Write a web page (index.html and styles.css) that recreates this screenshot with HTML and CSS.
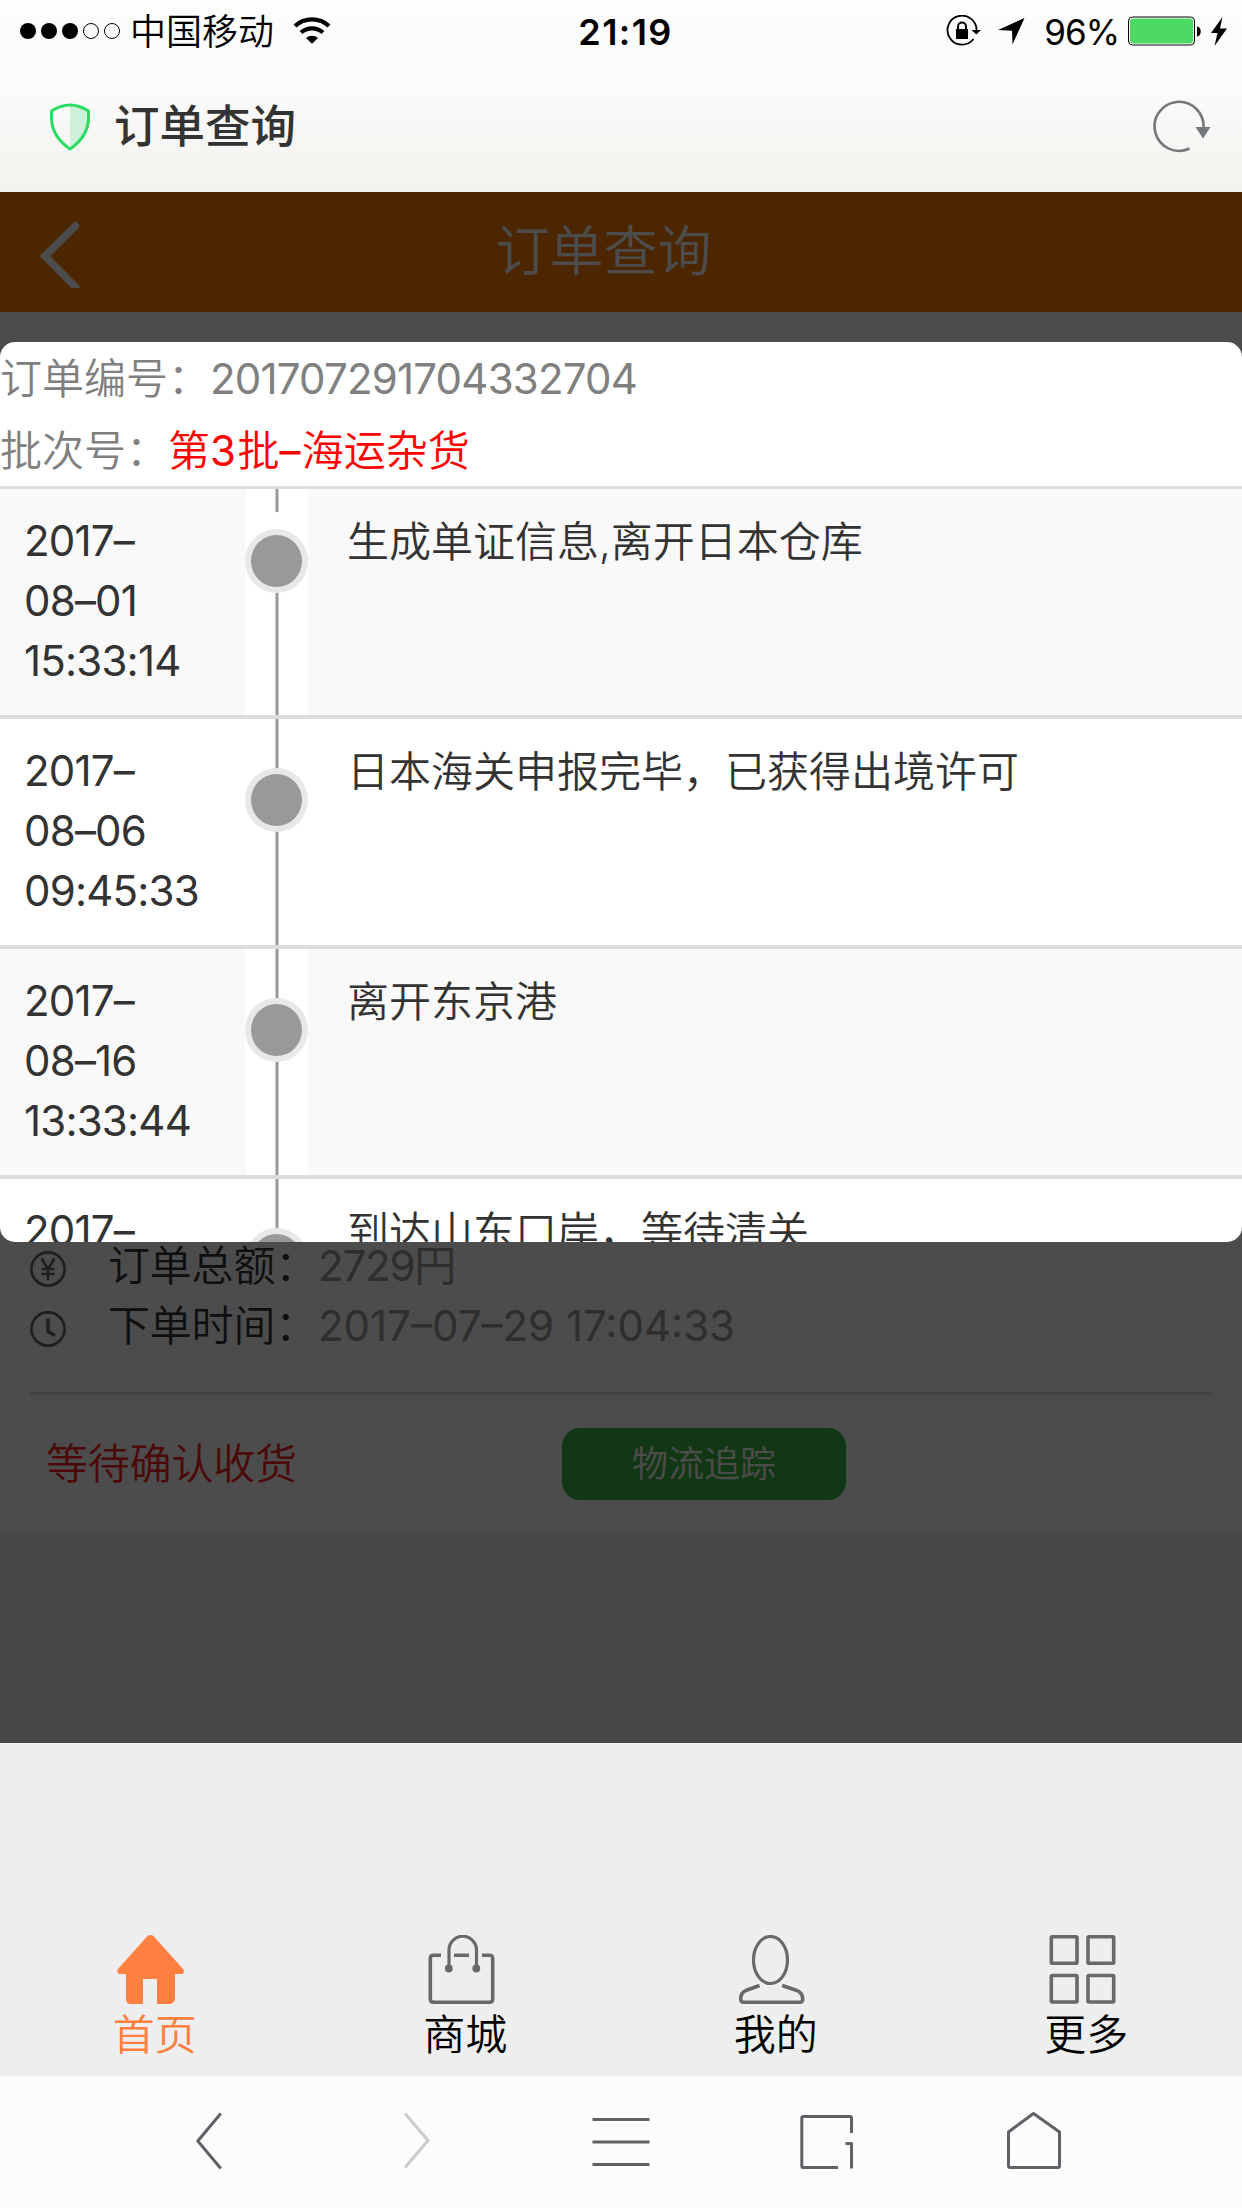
FILE: index.html
```html
<!DOCTYPE html>
<html lang="zh-CN">
<head>
<meta charset="utf-8">
<title>订单查询</title>
<link rel="stylesheet" href="styles.css">
</head>
<body>
<div class="chrome">
  <div class="status">
    <div class="status-left">
      <svg class="signal" width="102" height="18" viewBox="19 21 102 18"><g fill="#000"><circle cx="28" cy="30" r="8"/><circle cx="49" cy="30" r="8"/><circle cx="70" cy="30" r="8"/></g><g fill="none" stroke="#000"><circle cx="91" cy="30" r="7.5"/><circle cx="112" cy="30" r="7.5"/></g></svg>
      <span class="carrier">中国移动</span>
      <svg class="wifi" width="38" height="28" viewBox="293.500 15.500 38 28"><g fill="none" stroke="#000" stroke-width="4.200"><path d="M295.500 25.500a25 25 0 0 1 34 0"/><path d="M301.500 32a16.500 16.500 0 0 1 22 0"/></g><path d="M306.500 37.500a9.500 9.500 0 0 1 12 0l-6 5.700z"/></svg>
    </div>
    <div class="clock">21:19</div>
    <div class="status-right">
      <svg width="35" height="32" viewBox="946 14 35 32"><path d="M976.500 30A14.500 14.500 0 1 0 973.500 38" fill="none" stroke="#000" stroke-width="1.800"/><path d="M971.500 29h9.500l-4.700 4.500z"/><path d="M956 28h12v10h-12z"/><path d="M958 29v-3.500a4 4 0 0 1 8 0V29" fill="none" stroke="#000" stroke-width="2"/></svg>
      <svg class="locate" width="27" height="27" viewBox="1000 18 27 27"><path d="M1026.500 18L1000 30l14 .800 .500 13.700z"/></svg>
      <span class="percent">96%</span>
      <svg width="74" height="30" viewBox="1128 15.500 74 30"><rect x="1128.500" y="16.500" width="66" height="28" rx="4" fill="#fff" stroke="#000"/><rect x="1130" y="18" width="63" height="25" rx="3" fill="#4cd964"/><path d="M1197 26c5 0 5 10 0 10z"/></svg>
      <svg class="bolt" width="16" height="29" viewBox="1211 15.500 16 29"><path d="M1222.500 15.500L1211 31.500h6.500l-3 13L1227 27h-7z"/></svg>
    </div>
  </div>
  <div class="titlebar">
    <svg width="40" height="48" viewBox="50.500 103 40 48"><path d="M70.500 105c7 0 13 2.500 18.500 6v7c0 12-7 23-18.500 31z" fill="#cdf1d8"/><path d="M70.500 105c-7 0-13 2.500-18.500 6v7c0 12 7 23 18.500 31 11.500-8 18.500-19 18.500-31v-7c-5.500-3.500-11.500-6-18.500-6z" fill="none" stroke="#2bdc62" stroke-width="3" stroke-linejoin="round"/></svg>
    <span class="site-title">订单查询</span>
    <svg class="reload" width="58" height="54" viewBox="1153 99 58 54"><path d="M1203.500 127A24.500 24.500 0 1 0 1189.500 147.500" fill="none" stroke="#75787b" stroke-width="2.600"/><path d="M1195.500 126h15l-7.500 11.500z" fill="#75787b"/></svg>
  </div>
</div>

<div class="page">
  <div class="page-head">
    <svg class="back" width="42" height="72" viewBox="39 216 42 72"><path d="M75.500 226L45 256l30.500 31" fill="none" stroke="#fff" stroke-width="7.500" stroke-linecap="round"/></svg>
    <h1>订单查询</h1>
  </div>
  <div class="order">
    <div class="order-row">
      <svg width="36" height="36" viewBox="0 0 36 36"><g fill="none" stroke="#666" stroke-width="2.600"><circle cx="18" cy="18" r="16.600"/><path d="M11.500 7.500L18 18l6.500-10.500M18 18v11M11.500 18h13M11.500 23h13"/></g></svg>
      <span class="label">订单总额：</span><span class="value amount">2729円</span>
    </div>
    <div class="order-row">
      <svg width="36" height="36" viewBox="0 0 36 36"><g fill="none" stroke="#666" stroke-width="2.600"><circle cx="18" cy="18" r="16.600"/><path d="M18 7.500v13l7 4" stroke-width="3.400"/></g></svg>
      <span class="label">下单时间：</span><span class="value stamp">2017–07–29 17:04:33</span>
    </div>
    <div class="order-foot">
      <span class="state">等待确认收货</span>
      <span class="track">物流追踪</span>
    </div>
  </div>

  <div class="mask">
    <div class="dialog">
      <p class="info">订单编号：<span class="no">201707291704332704</span></p>
      <p class="info">批次号：<span class="batch">第<span class="num">3</span>批<span class="num">–</span>海运杂货</span></p>
      <ul class="steps">
        <li class="step first">
          <div class="time"><span>2017–</span><span>08–01</span><span>15:33:14</span></div>
          <div class="rail"><i class="dot"></i></div>
          <div class="text">生成单证信息,离开日本仓库</div>
        </li>
        <li class="step">
          <div class="time"><span>2017–</span><span>08–06</span><span>09:45:33</span></div>
          <div class="rail"><i class="dot"></i></div>
          <div class="text">日本海关申报完毕，已获得出境许可</div>
        </li>
        <li class="step">
          <div class="time"><span>2017–</span><span>08–16</span><span>13:33:44</span></div>
          <div class="rail"><i class="dot"></i></div>
          <div class="text">离开东京港</div>
        </li>
        <li class="step">
          <div class="time"><span>2017–</span></div>
          <div class="rail"><i class="dot"></i></div>
          <div class="text">到达山东口岸，等待清关</div>
        </li>
      </ul>
    </div>
  </div>
</div>

<div class="tabs">
  <div class="tab active">
    <svg width="67" height="70" viewBox="117.500 1935 67 70"><path d="M148 1936q3-2 6 0l30 33.500q1.500 4-2 4.500h-6.500v25q-1 5-6 5h-12v-25h-14v25h-12q-5 0-5-5v-25H120q-3-.500-2-4.500z" fill="#ff8040"/></svg>
    <span>首页</span>
  </div>
  <div class="tab">
    <svg width="67" height="70" viewBox="427.500 1935 67 70"><g fill="none" stroke="#696969" stroke-width="3.600"><path d="M440.500 1955.200H433q-3.200 0-3.200 3.200V1999q0 3.200 3.200 3.200h56q3.200 0 3.200-3.200v-40.600q0-3.200-3.200-3.200h-7.500M453.500 1955.200h15"/><path d="M448.500 1968v-18a13.500 13.500 0 0 1 27.500 0v18" stroke-width="3.200"/></g><circle cx="448.300" cy="1968.500" r="3.900" fill="#696969"/><circle cx="475.800" cy="1968.500" r="3.900" fill="#696969"/></svg>
    <span>商城</span>
  </div>
  <div class="tab">
    <svg width="67" height="70" viewBox="738 1935 67 70"><g fill="none" stroke="#696969" stroke-width="3.200"><ellipse cx="770.500" cy="1960" rx="17" ry="23.500"/><path d="M759.500 1985.500l-13 4.700c-5 2-5.800 5-5.800 9 0 2 1 3 3 3h56c2 0 3-1 3-3 0-4-1.500-7-6.500-9l-14-4.700" stroke-width="3.600"/></g></svg>
    <span>我的</span>
  </div>
  <div class="tab">
    <svg width="67" height="70" viewBox="1048.500 1935 67 70"><g fill="none" stroke="#696969" stroke-width="3.600"><rect x="1050.800" y="1936.800" width="25.700" height="26.500" rx="1"/><rect x="1087.500" y="1936.800" width="25.700" height="26.500" rx="1"/><rect x="1050.800" y="1975.500" width="25.700" height="26.500" rx="1"/><rect x="1087.500" y="1975.500" width="25.700" height="26.500" rx="1"/></g></svg>
    <span>更多</span>
  </div>
</div>

<div class="toolbar">
  <svg width="206" height="60" viewBox="106 2111 206 60"><path d="M220.800 2113.500l-23 27.500 23 27.500" class="ln"/></svg>
  <svg width="206" height="60" viewBox="312 2111 206 60"><path d="M405 2113.500l23 27-23 27" class="ln dim"/></svg>
  <svg width="206" height="60" viewBox="518 2111 206 60"><path d="M592.500 2119.500h57M592.500 2142h57M592.500 2164.500h57" class="ln"/></svg>
  <svg width="206" height="60" viewBox="724 2111 206 60"><path d="M851.500 2133v-15q0-1.600-1.600-1.600h-46.500q-1.600 0-1.600 1.600v48q0 1.600 1.600 1.600H838M845.500 2143.500h6v25" class="ln"/></svg>
  <svg width="206" height="60" viewBox="930 2111 206 60"><path d="M1033.500 2113.500l-25 18.500v34q0 1.500 1.500 1.500h48q1.500 0 1.500-1.500v-34z" class="ln"/></svg>
</div>
</body>
</html>
```
FILE: styles.css
```css
* { box-sizing: border-box; margin: 0; padding: 0; }
body {
  width: 1242px;
  font: 350 42px/60px Inter, "Noto Sans CJK SC", sans-serif;
  color: #333;
  background: #eee;
  overflow: hidden;
}
svg { display: block; flex: none; }

/* browser chrome */
.chrome { height: 192px; background: linear-gradient(#fdfdfd, #fafaf9 50%, #f3f2ee); color: #000; }
.status { height: 60px; display: grid; grid-template-columns: 1fr auto 1fr; align-items: center; font-size: 36px; padding: 0 15px 0 19px; }
.status-left, .status-right { display: flex; align-items: center; }
.status-right { justify-content: flex-end; }
.carrier { margin: 1px 19px 0 9px; }
.wifi { margin-top: -2px; }
.clock { font-weight: 600; padding: 2px 0 0 5px; font-size: 36px; letter-spacing: 1.4px; }
.locate { margin-left: 17px; }
.percent { margin: 2px 9px 0 19px; font-size: 35px; font-weight: 400; letter-spacing: -1px; }
.bolt { margin-left: 9px; }
.titlebar { height: 132px; display: flex; align-items: center; padding: 2px 31px 0 50px; }
.site-title { flex: 1; margin-left: 24px; font-size: 45.5px; font-weight: 500; color: #333; }

/* web page under the mask */
.page { position: relative; height: 1551px; background: #eee; overflow: hidden; }
.page-head { height: 120px; background: #ff7f00; color: #fff; display: grid; grid-template-columns: 81px 1fr 81px; align-items: center; }
.back { justify-self: end; }
.page-head h1 { font-size: 54px; font-weight: inherit; line-height: 120px; text-align: center; margin-left: -35px; }
.order { height: 1221px; background: #fff; padding: 0 30px; display: flex; flex-direction: column; justify-content: flex-end; }
.order-row { height: 60px; display: flex; align-items: center; line-height: 62px; }
.order-row svg { margin-top: 6px; }
.label { width: 252px; padding-left: 42px; white-space: nowrap; letter-spacing: -0.2px; }
.value { color: #999; font-weight: 400; }
.amount { letter-spacing: -1.2px; }
.order-foot { height: 141px; margin-top: 36px; border-top: 3px solid #ddd; display: flex; align-items: center; }
.state { width: 532px; padding-left: 16px; color: #fb1f24; letter-spacing: -0.2px; }
.track { width: 284px; height: 72px; border-radius: 18px; background: #3cb743; color: #fff; font-size: 36px; line-height: 72px; text-align: center; }

/* tracking dialog */
.mask { position: absolute; inset: 0; background: rgba(0, 0, 0, 0.7); padding-top: 150px; }
.dialog { height: 900px; border-radius: 15px; background: #fff; overflow: hidden; }
.info { height: 72px; line-height: 73px; color: #808080; white-space: nowrap; }
.no { font-weight: 400; letter-spacing: -0.8px; }
.batch { color: #f00; }
.num { font-weight: 400; letter-spacing: 1.4px; }
.steps { list-style: none; border-top: 3px solid #ddd; }
.step { height: 230px; display: flex; border-bottom: 4px solid #ddd; }
.step:nth-child(odd) { background: #f9f9f9; }
.time { width: 245px; padding: 22px 0 0 24px; font-weight: 400; letter-spacing: -0.8px; }
.time span { display: block; }
.rail { width: 63px; padding-top: 49px; background: linear-gradient(90deg, #ccc 1px, #999 1px 3px, #ccc 3px) 30px 0 / 4px 100% no-repeat #fff; }
.dot { display: block; width: 63px; height: 64px; border-radius: 50%; border: 6px solid #e8e8e8; background: #999; }
.first .rail { padding-top: 40px; }
.first .dot { box-shadow: 0 -17px 0 0 #fff; }
.text { flex: 1; padding: 23px 0 0 39px; white-space: nowrap; }

/* site tabs */
.tabs { height: 333px; padding-top: 192px; display: grid; grid-template-columns: repeat(4, 310.5px); background: #eee; color: #000; }
.tab { display: flex; flex-direction: column; align-items: center; padding-right: 1px; }
.tab svg { margin-right: 8px; }
.active { color: #ff8040; }

/* browser toolbar */
.toolbar { height: 132px; background: #fcfcfc; display: flex; justify-content: center; align-items: center; padding-bottom: 2px; }
.ln { fill: none; stroke: #5e6266; stroke-width: 3; stroke-linejoin: round; }
.dim { stroke: #ccc; }
```
